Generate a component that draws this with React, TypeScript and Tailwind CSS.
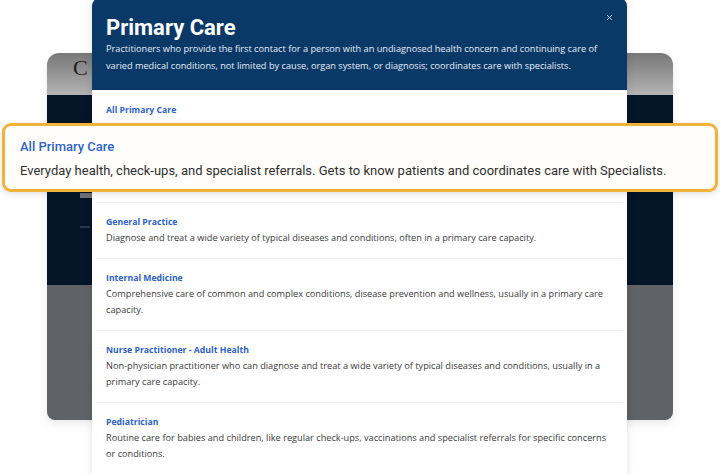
import { X } from 'lucide-react';

type Specialty = {
  name: string;
  description?: string;
};

const specialties: Specialty[] = [
  { name: 'All Primary Care' },
  {
    name: 'General Practice',
    description: 'Diagnose and treat a wide variety of typical diseases and conditions, often in a primary care capacity.',
  },
  {
    name: 'Internal Medicine',
    description:
      'Comprehensive care of common and complex conditions, disease prevention and wellness, usually in a primary care capacity.',
  },
  {
    name: 'Nurse Practitioner - Adult Health',
    description:
      'Non-physician practitioner who can diagnose and treat a wide variety of typical diseases and conditions, usually in a primary care capacity.',
  },
  {
    name: 'Pediatrician',
    description:
      'Routine care for babies and children, like regular check-ups, vaccinations and specialist referrals for specific concerns or conditions.',
  },
];

function BackgroundWindow() {
  return (
    <div className="absolute left-[47px] top-[53px] w-[626px] h-[367px] flex flex-col rounded-tl-[12px] rounded-tr-[12px] rounded-b-[8px] overflow-hidden shadow-[0_4px_10px_rgba(0,0,0,0.08)]">
      <div className="h-[42px] bg-gradient-to-b from-[#787878] to-[#b4b4b4] flex items-start pl-[26px] pt-[2px]">
        <span className="text-[22px] leading-[26px] text-[#1d1d1d] font-['Liberation_Serif',serif]">C</span>
      </div>
      <div className="h-[190px] bg-[#051528] flex flex-col pl-[33px] pt-[98px] gap-[28px]">
        <div className="w-[12px] h-[5px] bg-[#6f737a]" />
        <div className="w-[10px] h-[2px] bg-[#2a3546]" />
      </div>
      <div className="flex-1 bg-[#5f6266]" />
    </div>
  );
}

function SpecialtyRow({ item, first }: { item: Specialty; first?: boolean }) {
  return (
    <div
      className={`mx-[4px] px-[10px] ${first ? 'pt-[14px] pb-[86px]' : 'pt-[13px] pb-[11px] border-t border-[#ececec]'}`}
    >
      <div className="text-[8.7px] leading-[12px] font-bold text-[#2b5fca]">{item.name}</div>
      {item.description && (
        <p className="mt-[2px] text-[9.2px] leading-[16.5px] text-[#3a3a3a]">{item.description}</p>
      )}
    </div>
  );
}

function Modal() {
  return (
    <div className="absolute left-[92px] top-[-2px] w-[535px] h-[480px] bg-white rounded-t-[8px] overflow-hidden shadow-[0_0_8px_rgba(0,0,0,0.12)]">
      <div className="relative h-[92px] bg-[#0a3968] px-[14px] pt-[17px]">
        <h2 className="text-[22px] leading-[26px] font-bold text-white font-['Roboto',sans-serif]">Primary Care</h2>
        <p className="-mt-[1px] text-[9.2px] leading-[17px] text-[#e6edf5]">
          Practitioners who provide the first contact for a person with an undiagnosed health concern and continuing care of
          varied medical conditions, not limited by cause, organ system, or diagnosis; coordinates care with specialists.
        </p>
        <button className="absolute right-[13px] top-[15px] text-[#c9d4e2]">
          <X size={9} strokeWidth={2.5} />
        </button>
      </div>
      <div className="flex flex-col">
        {specialties.map((item, i) => (
          <SpecialtyRow key={item.name} item={item} first={i === 0} />
        ))}
      </div>
    </div>
  );
}

function Callout() {
  return (
    <div className="absolute left-[2px] top-[123px] w-[716px] h-[69px] rounded-[9px] border-[3px] border-[#f3b23a] bg-[#fffefc] px-[15px] pt-[13px] shadow-[0_2px_6px_rgba(0,0,0,0.12)] font-['Roboto',sans-serif]">
      <div className="text-[13px] leading-[16px] font-medium text-[#2b62cc]">All Primary Care</div>
      <p className="mt-[8px] text-[13px] leading-[16px] text-[#2f2f2f]">
        Everyday health, check-ups, and specialist referrals. Gets to know patients and coordinates care with Specialists.
      </p>
    </div>
  );
}

export default function App() {
  return (
    <div className="relative w-[720px] h-[474px] overflow-hidden bg-white font-['Open_Sans',sans-serif]">
      <BackgroundWindow />
      <Modal />
      <Callout />
    </div>
  );
}
